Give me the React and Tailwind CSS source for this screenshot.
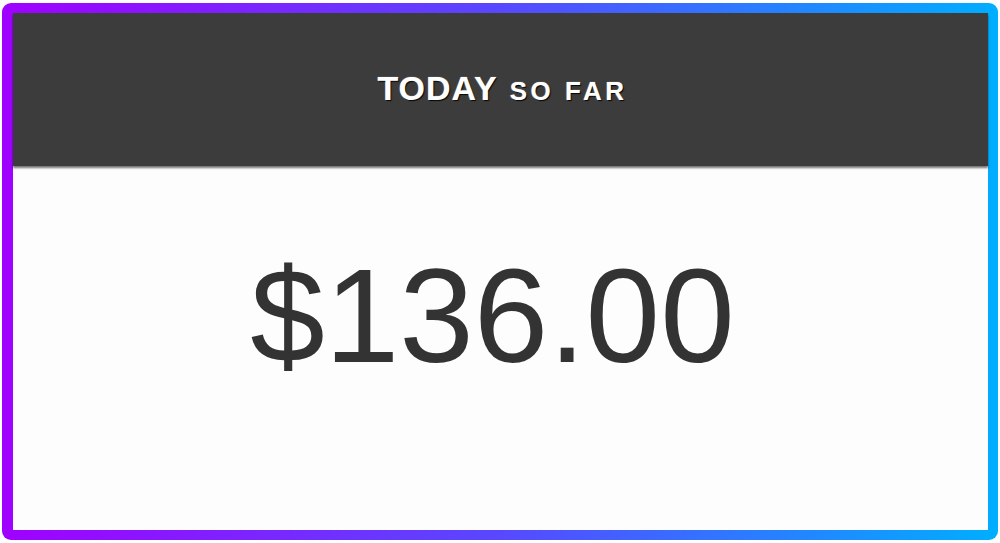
export default function App() {
  return (
    <div className="w-[1000px] h-[543px] bg-white pt-[3px] pb-[3px] pl-[2px] pr-[2px]">
      {/* gradient frame */}
      <div className="h-full rounded-[9px] bg-linear-to-r/srgb from-[#a000ff] via-[#5848ff] to-[#00aeff] pl-[11px] pr-[10px] pt-[10px] pb-[10px]">
        <div className="h-full flex flex-col bg-[#fdfdfd]">
          <header className="h-[153px] shrink-0 bg-[#3c3c3c] flex items-center justify-center shadow-[0_2px_2px_rgba(0,0,0,0.55)] relative z-10">
            <h2
              className="flex items-baseline gap-[12px] text-white font-bold uppercase [text-shadow:1px_1px_1px_rgba(0,0,0,0.95),0_0_1px_rgba(255,255,255,0.8)] pl-[4px] pb-[2px]"
              style={{ fontFamily: '"Liberation Sans", Arial, sans-serif' }}
            >
              <span className="text-[34px] tracking-[1px]">Today</span>
              <span className="text-[26px] tracking-[3.5px]">so far</span>
            </h2>
          </header>
          <main className="flex-1 flex justify-center pt-[83px]">
            <p
              className="text-[134px] leading-none text-[#333333] pr-[16px]"
              style={{ fontFamily: '"Liberation Sans", Arial, sans-serif' }}
            >
              $136.00
            </p>
          </main>
        </div>
      </div>
    </div>
  );
}
